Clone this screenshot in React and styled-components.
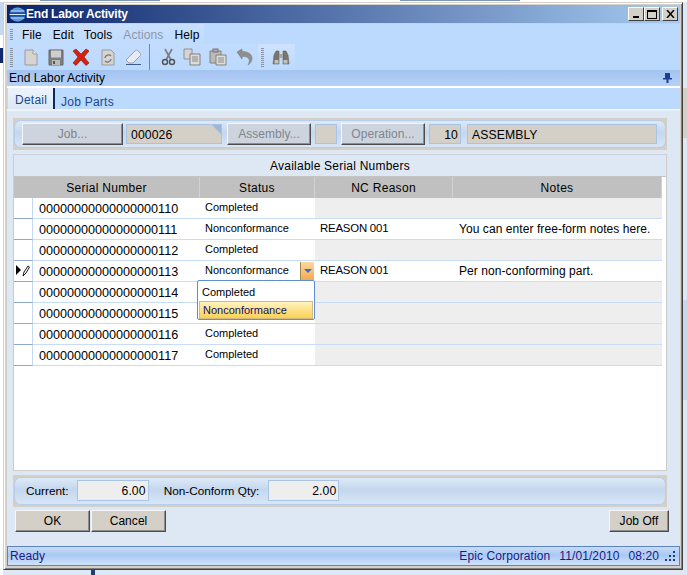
import React from 'react';
import styled, { createGlobalStyle } from 'styled-components';

const Global = createGlobalStyle`
  html, body { margin: 0; padding: 0; width: 687px; height: 575px; overflow: hidden; background: #dee8f5; }
  body { font-family: "Liberation Sans", Arial, sans-serif; font-size: 12px; color: #000; }
  * { box-sizing: border-box; }
`;

const Desktop = styled.div`
  position: relative; width: 687px; height: 575px; overflow: hidden; background: #dee8f5;
  padding: 2px 0 0 3px;
`;
const Behind = styled.div`
  position: absolute; left: ${p => p.$x}px; top: ${p => p.$y}px;
  width: ${p => p.$w}px; height: ${p => p.$h}px; background: ${p => p.$c};
`;
const Window = styled.div`
  position: relative; width: 680px; height: 568px; display: flex; flex-direction: column;
  background: #d4d0c8; border: 1px solid; border-color: #d4d0c8 #404040 #404040 #d4d0c8;
  box-shadow: inset 1px 1px 0 #fff, inset -1px -1px 0 #808080;
  padding: 2px 2px 3px 3px;
`;
const TitleBar = styled.div`
  height: 18px; flex: none; display: flex; align-items: center; padding: 0 2px 0 2px;
  background: linear-gradient(90deg, #0a246a, #a6caf0);
  color: #fff; font-weight: bold; font-size: 12px; letter-spacing: -0.22px; gap: 0;
`;
const TitleText = styled.span` flex: 1; margin-left: 0; `;
const WinBtn = styled.div`
  width: 16px; height: 14px; background: #d4d0c8; margin-left: ${p => p.$gap || 0}px;
  border: 1px solid; border-color: #fff #404040 #404040 #fff;
  display: flex; align-items: center; justify-content: center;
`;
const Frame = styled.div`
  flex: 1; display: flex; flex-direction: column; margin-top: 1px; background: #dee8f5; min-height: 0;
`;
const MenuRow = styled.div`
  height: 20px; flex: none; background: #bcd9fe; display: flex;
`;
const MenuStrip = styled.div`
  width: 197px; display: flex; align-items: center; padding: 1px 0 0 3px;
  background: linear-gradient(180deg, #c9e0fd, #bfdbff);
`;
const Grip = styled.div`
  width: 3px; height: ${p => p.$h}px; flex: none; margin-right: ${p => p.$mr}px;
  background: repeating-linear-gradient(180deg, #8a93a0 0 1px, transparent 1px 2px);
`;
const MenuItem = styled.span`
  font-size: 12px; letter-spacing: 0.1px; margin-right: ${p => p.$mr}px; color: ${p => p.$off ? '#8f98a6' : '#000'};
`;
const ToolRow = styled.div`
  height: 26px; flex: none; background: #bcd9fe; display: flex; align-items: center;
`;
const ToolStrip = styled.div`
  height: 26px; flex: none; display: flex; align-items: center; width: ${p => p.$w}px; padding-left: ${p => p.$pl}px;
  background: linear-gradient(180deg, ${p => p.$c || '#c2dcfe'}, #bcd9fe);
`;
const ToolIcon = styled.svg`
  width: 18px; height: 18px; flex: none; margin-right: ${p => p.$mr}px; display: block;
`;
const ToolSep = styled.div`
  width: 1px; height: 26px; background: #7d8792; flex: none; margin-right: ${p => p.$mr}px;
`;
const PanelHeader = styled.div`
  height: 16px; flex: none; display: flex; align-items: center; justify-content: space-between;
  padding: 0 8px 0 2px; font-size: 12px;
  background: linear-gradient(180deg, #a3c3f0, #b5d1f7);
`;
const TabStrip = styled.div`
  height: 25px; flex: none; background: #bcd9fe; display: flex; align-items: stretch;
  border-top: 2px solid #fff; border-bottom: 2px solid #eef3fa;
`;
const Tab = styled.div`
  color: #164a90; font-size: 12px; letter-spacing: 0.25px; display: flex; align-items: ${p => p.$on ? 'center' : 'flex-end'};
  padding: ${p => p.$on ? '2px 0 0 7px' : '0 0 0 6px'}; width: ${p => p.$on ? '47px' : 'auto'};
  background: ${p => p.$on ? 'linear-gradient(180deg,#edf3fc,#dbe7f6)' : 'transparent'};
  border-right: ${p => p.$on ? '2px solid #0a2a5e' : '0'};
  margin-left: ${p => p.$on ? '1px' : '0'};
`;
const Body = styled.div`
  flex: 1; display: flex; flex-direction: column; padding: 7px 13px 0 6px; min-height: 0; position: relative;
`;
const GroupFrame = styled.div`
  flex: none; height: 32px; background: #d4d0c8; padding: 2px 1px 2px 1px; margin-top: ${p => p.$mt || 0}px; display: flex;
`;
const Group = styled.div`
  flex: 1; display: flex; align-items: center;
  padding: ${p => p.$pad};
  border-radius: 7px; border: 1px solid #b7cde8;
  background: linear-gradient(180deg, #dde9f8 0%, #c4d7ed 45%, #d7e6f7 100%);
`;
const FlatBtn = styled.div`
  height: 22px; width: ${p => p.$w}px; flex: none; display: flex; align-items: center; justify-content: center;
  font-size: 12px; letter-spacing: 0.05px; margin-left: ${p => p.$ml || 0}px;
  background: ${p => p.$off ? '#cdd4dd' : '#d4d0c8'};
  color: ${p => p.$off ? '#7f868e' : '#000'};
  border: 1px solid; border-color: #f4f6f9 #4c4c4c #4c4c4c #f4f6f9;
  box-shadow: inset -1px -1px 0 #8d8d8d;
`;
const Field = styled.div`
  height: ${p => p.$h || 20}px; width: ${p => p.$w}px; flex: none; margin: ${p => p.$m || '0'}; position: relative;
  display: flex; align-items: center; justify-content: ${p => p.$right ? 'flex-end' : 'flex-start'};
  padding: 1px ${p => p.$right ? '2px' : '0'} 0 ${p => p.$right ? '0' : '4px'};
  background: ${p => p.$bg || '#d4d0c8'}; border: 1px solid #a9c3e3; font-size: 12.2px; letter-spacing: 0.1px;
`;
const Notch = styled.div`
  position: absolute; right: 0; top: 0; width: 0; height: 0;
  border-top: 9px solid #9bb6da; border-left: 9px solid transparent;
`;
const Table = styled.div`
  flex: none; height: 317px; margin-top: 4px; background: #fff; border: 1px solid #ccc; border-top: 0; display: flex; flex-direction: column;
  position: relative;
`;
const Caption = styled.div`
  height: 23px; flex: none; display: flex; align-items: center; justify-content: center;
  background: #dee8f5; border-top: 1px solid #ccd3dc; border-bottom: 1px solid #c4c4c4; font-size: 12px; letter-spacing: 0.22px;
`;
const HeadRow = styled.div`
  height: 21px; flex: none; display: grid; grid-template-columns: 186px 115px 138px 209px; width: 648px; background: #c0c0c0;
`;
const HeadCell = styled.div`
  display: flex; align-items: center; justify-content: center; font-size: 12px; letter-spacing: 0.3px;
  border-right: 1px solid #d2d2d2;
`;
const Row = styled.div`
  height: 21px; flex: none; display: grid; grid-template-columns: 19px 167px 115px 138px 209px; width: 648px;
`;
const Selector = styled.div`
  background: #fff; border-right: 1px solid #c3d8f2; border-bottom: 1px solid #8fa9c9;
  display: flex; align-items: center; justify-content: center;
`;
const Cell = styled.div`
  display: flex; align-items: center; position: relative; padding-left: ${p => p.$pl}px; white-space: nowrap;
  font-size: ${p => p.$fs}px; letter-spacing: ${p => p.$ls}px;
  padding-bottom: ${p => p.$pb || 0}px; padding-top: ${p => p.$pt || 0}px;
  background: ${p => p.$bg}; border-bottom: 1px solid #c9dcf5;
`;
const DropBtn = styled.div`
  position: absolute; left: 100px; top: 1px; width: 14px; height: 18px; border-left: 1px solid #a08a50;
  background: linear-gradient(180deg, #fbd9a0, #f5a953);
  display: flex; align-items: center; justify-content: center;
  &::after { content: ''; border-top: 4px solid #3b6fc0; border-left: 4px solid transparent; border-right: 4px solid transparent; }
`;
const DropList = styled.div`
  position: absolute; left: 183px; top: 126px; width: 118px; height: 40px; background: #fff; z-index: 2;
  border: 1px solid #5d8fd2; border-radius: 2px; padding: 2px 1px; display: flex; flex-direction: column;
`;
const DropItem = styled.div`
  height: 18px; flex: none; display: flex; align-items: center; padding: 0 0 1px 3px; font-size: 11px; letter-spacing: 0;
  color: ${p => p.$on ? '#10106e' : '#000'};
  background: ${p => p.$on ? 'linear-gradient(180deg,#fff3bd,#fcd054)' : '#fff'};
  border: ${p => p.$on ? '1px solid #d2bb80' : '0'};
`;
const Label = styled.span`
  font-size: 11.8px; margin: ${p => p.$m};
`;
const Buttons = styled.div`
  flex: none; display: flex; margin: 3px -2px 0 2px; height: 22px; justify-content: space-between;
`;
const ButtonPair = styled.div` display: flex; `;
const Spacer = styled.div` flex: 1; `;
const StatusBar = styled.div`
  flex: none; height: 20px; display: flex; align-items: center; padding: 0 3px 0 2px;
  border: 1px solid #5c85bf; color: #1a1a86; font-size: 12px; letter-spacing: 0.1px;
  background: linear-gradient(180deg, #c8dbf6 0%, #a9c9f3 45%, #d0e2f9 100%);
`;
const StatusRight = styled.span` margin-left: ${p => p.$ml || 0}px; `;
const ResizeGrip = styled.svg` width: 12px; height: 12px; margin-left: 5px; flex: none; `;

const rows = [
  ['00000000000000000110', 'Completed', '', ''],
  ['00000000000000000111', 'Nonconformance', 'REASON 001', 'You can enter free-form notes here.'],
  ['00000000000000000112', 'Completed', '', ''],
  ['00000000000000000113', 'Nonconformance', 'REASON 001', 'Per non-conforming part.', true],
  ['00000000000000000114', '', '', ''],
  ['00000000000000000115', '', '', ''],
  ['00000000000000000116', 'Completed', '', ''],
  ['00000000000000000117', 'Completed', '', ''],
];

const NewDoc = () => (
  <ToolIcon viewBox="0 0 18 18" $mr={7}><path d="M3 2h8l4 4v11H3z" fill="#d6d4d0" stroke="#9a9a9a"/><path d="M11 2v4h4" fill="#eee" stroke="#9a9a9a"/></ToolIcon>
);
const Save = () => (
  <ToolIcon viewBox="0 0 18 18" $mr={7}><path d="M2 2h14v15H2z" fill="#7e7e7e" stroke="#666"/><rect x="4" y="2.5" width="10" height="7" fill="#cfcfcf"/><rect x="5" y="12" width="8" height="5" fill="#bbb"/><rect x="6" y="13" width="2" height="3" fill="#555"/></ToolIcon>
);
const Cross = () => (
  <ToolIcon viewBox="0 0 18 18" $mr={9}><path d="M1 3L4 1l5 5 5-5 3 2-5 6 5 6-3 2.500-5-5.500-5 5.500-3-2.500 5-6z" fill="#d4200f" stroke="#8c2a1c" strokeWidth="0.7"/></ToolIcon>
);
const Refresh = () => (
  <ToolIcon viewBox="0 0 18 18" $mr={7}><path d="M3 2h9l3 3v12H3z" fill="#d6d4d0" stroke="#9a9a9a"/><path d="M6 10a3.500 3.500 0 0 1 6-2M12 11a3.500 3.500 0 0 1-6 2" fill="none" stroke="#777" strokeWidth="1.400"/></ToolIcon>
);
const Eraser = () => (
  <ToolIcon viewBox="0 0 18 18" $mr={7}><path d="M2 12L11 3c1-1 2-1 3 0l2 2c1 1 1 2 0 3l-7 7H5z" fill="#e8ecf2" stroke="#9aa2ad"/><path d="M2 16.500h15" stroke="#3e5a8c"/></ToolIcon>
);
const Scissors = () => (
  <ToolIcon viewBox="0 0 18 18" $mr={5}><path d="M5 1l6 11M12 1L6 12" stroke="#7c7c7c" strokeWidth="1.600" fill="none"/><circle cx="5" cy="14" r="2.500" fill="none" stroke="#555" strokeWidth="1.500"/><circle cx="12" cy="14" r="2.500" fill="none" stroke="#555" strokeWidth="1.500"/></ToolIcon>
);
const Copy = () => (
  <ToolIcon viewBox="0 0 18 18" $mr={8}><path d="M1 1h8v10H1z" fill="#d6d4d0" stroke="#909090"/><path d="M7 6h10v11H7z" fill="#dedcd8" stroke="#808080"/><path d="M9 9h6M9 11h6M9 13h6" stroke="#888"/></ToolIcon>
);
const Paste = () => (
  <ToolIcon viewBox="0 0 18 18" $mr={9}><path d="M1 3h11v12H1z" fill="#bcbab6" stroke="#808080"/><rect x="4" y="1" width="5" height="3" fill="#aaa" stroke="#777"/><path d="M7 7h10v10H7z" fill="#e0ded9" stroke="#808080"/><path d="M9 10h6M9 12h6M9 14h6" stroke="#888"/></ToolIcon>
);
const Undo = () => (
  <ToolIcon viewBox="0 0 18 18" $mr={0}><path d="M1 4l5-3v2.500c5 0 10 2 10 7 0 3-2 5-4 6.500 1-2 2-4 1-6-1-2-4-3-7-2.500V11z" fill="#8f8f8f" stroke="#7a7a7a" strokeWidth="0.6"/></ToolIcon>
);
const Binoculars = () => (
  <ToolIcon viewBox="0 0 18 18" $mr={0}><path d="M1 16l1-9 2-4h3v13zM17 16l-1-9-2-4h-3v13z" fill="#77776f" stroke="#66665f" strokeWidth="0.6"/><rect x="7" y="6" width="4" height="4" fill="#a8a69e"/><rect x="2.500" y="12" width="4" height="3.500" fill="#c4c1b8"/><rect x="11.500" y="12" width="4" height="3.500" fill="#c4c1b8"/></ToolIcon>
);

function StatusWrap() {
  return (
    <StatusBar>
      Ready
      <Spacer />
      <StatusRight>Epic Corporation</StatusRight>
      <StatusRight $ml={9}>11/01/2010</StatusRight>
      <StatusRight $ml={9}>08:20</StatusRight>
      <ResizeGrip viewBox="0 0 12 12">
        <path d="M9 1h2v2H9zM5 5h2v2H5zM9 5h2v2H9zM1 9h2v2H1zM5 9h2v2H5zM9 9h2v2H9z" fill="#1c3f7a" />
      </ResizeGrip>
    </StatusBar>
  );
}

export default function App() {
  return (
    <Desktop>
      <Global />
      <Behind $x={0} $y={0} $w={3} $h={35} $c="#c4d8f0" />
      <Behind $x={0} $y={35} $w={3} $h={14} $c="#ffffff" />
      <Behind $x={0} $y={48} $w={3} $h={15} $c="#12286e" />
      <Behind $x={0} $y={63} $w={3} $h={512} $c="#ffffff" />
      <Behind $x={0} $y={0} $w={687} $h={2} $c="#ffffff" />
      <Behind $x={40} $y={0} $w={120} $h={1} $c="#7d97b8" />
      <Behind $x={400} $y={0} $w={120} $h={1} $c="#7d97b8" />
      <Behind $x={91} $y={570} $w={4} $h={5} $c="#1f3f7a" />
      <Behind $x={683} $y={88} $w={4} $h={50} $c="#d4d0c8" />
      <Behind $x={683} $y={300} $w={4} $h={100} $c="#c8d8ec" />
      <Window>
        <TitleBar>
          <svg width="17" height="15" viewBox="0 0 17 15" style={{ flex: 'none' }}>
            <defs>
              <linearGradient id="orb" x1="0" y1="0" x2="0" y2="1">
                <stop offset="0" stopColor="#6fb0ee" />
                <stop offset="0.5" stopColor="#0f3f9e" />
                <stop offset="1" stopColor="#6fb0ee" />
              </linearGradient>
            </defs>
            <ellipse cx="8.500" cy="7.500" rx="8" ry="7" fill="url(#orb)" />
            <path d="M1.500 4h14M0.500 7.500h16M1.500 11h14" stroke="#d5ecfb" strokeWidth="1" />
          </svg>
          <TitleText>End Labor Activity</TitleText>
          <WinBtn><svg width="8" height="8"><rect x="1" y="6" width="6" height="2" fill="#000" /></svg></WinBtn>
          <WinBtn><svg width="10" height="9"><rect x="0.500" y="1" width="9" height="7.500" fill="none" stroke="#000" /><rect x="0" y="0" width="10" height="2" fill="#000" /></svg></WinBtn>
          <WinBtn $gap={2}><svg width="9" height="8"><path d="M1 0l7 8M8 0L1 8" stroke="#000" strokeWidth="1.500" /></svg></WinBtn>
        </TitleBar>
        <Frame>
          <MenuRow>
            <MenuStrip>
              <Grip $h={12} $mr={9} />
              <MenuItem $mr={11}>File</MenuItem>
              <MenuItem $mr={10}>Edit</MenuItem>
              <MenuItem $mr={11}>Tools</MenuItem>
              <MenuItem $mr={11} $off>Actions</MenuItem>
              <MenuItem $mr={0}>Help</MenuItem>
            </MenuStrip>
          </MenuRow>
          <ToolRow>
            <ToolStrip $w={251} $pl={3}>
              <Grip $h={19} $mr={9} />
              <NewDoc /><Save /><Cross /><Refresh /><Eraser />
              <ToolSep $mr={10} />
              <Scissors /><Copy /><Paste /><Undo />
            </ToolStrip>
            <ToolStrip $w={37} $pl={3} $c="#cfe2fd">
              <Grip $h={19} $mr={8} />
              <Binoculars />
            </ToolStrip>
          </ToolRow>
          <PanelHeader>
            End Labor Activity
            <svg width="9" height="10" viewBox="0 0 9 10"><path d="M2 0h5v5H2zM0 5h9v1.500H0zM3.500 6h2v4h-2z" fill="#1c3f96" /></svg>
          </PanelHeader>
          <TabStrip>
            <Tab $on>Detail</Tab>
            <Tab>Job Parts</Tab>
          </TabStrip>
          <Body>
            <GroupFrame>
              <Group $pad="0 0 0 7px">
                <FlatBtn $off $w={101}>Job...</FlatBtn>
                <Field $w={96} $m="0 5px 0 3px">000026<Notch /></Field>
                <FlatBtn $off $w={84}>Assembly...</FlatBtn>
                <Field $w={22} $m="0 4px 0 4px" />
                <FlatBtn $off $w={84}>Operation...</FlatBtn>
                <Field $w={32} $m="0 6px 0 4px" $right>10</Field>
                <Field $w={190}>ASSEMBLY</Field>
              </Group>
            </GroupFrame>
            <Table>
              <Caption>Available Serial Numbers</Caption>
              <HeadRow>
                <HeadCell>Serial Number</HeadCell>
                <HeadCell>Status</HeadCell>
                <HeadCell>NC Reason</HeadCell>
                <HeadCell>Notes</HeadCell>
              </HeadRow>
              {rows.map(r => {
                const blank = r[2] ? '#fff' : '#eeeeee';
                return (
                  <Row key={r[0]}>
                    <Selector>
                      {r[4] && (
                        <svg width="14" height="12" viewBox="0 0 14 12">
                          <path d="M0 0l5 5-5 5z" fill="#000" />
                          <path d="M7 11l1-4 4-6 1.500 1-3.500 6z" fill="#fff" stroke="#000" strokeWidth="0.9" />
                        </svg>
                      )}
                    </Selector>
                    <Cell $pl={6} $fs={12.6} $ls={0} $pt={1} $bg="#fff">{r[0]}</Cell>
                    <Cell $pl={5} $fs={11} $ls={0} $pb={3} $bg="#fff">
                      {r[1]}
                      {r[4] && <DropBtn />}
                    </Cell>
                    <Cell $pl={5} $fs={11.4} $ls={-0.2} $pb={3} $bg={blank}>{r[2]}</Cell>
                    <Cell $pl={6} $fs={12} $ls={0.07} $bg={blank}>{r[3]}</Cell>
                  </Row>
                );
              })}
              <DropList>
                <DropItem>Completed</DropItem>
                <DropItem $on>Nonconformance</DropItem>
              </DropList>
            </Table>
            <GroupFrame $mt={4}>
              <Group $pad="0 0 1px 0">
                <Label $m="0 8px 0 11px">Current:</Label>
                <Field $w={72} $h={21} $bg="#eeeeee" $right>6.00</Field>
                <Label $m="0 9px 0 15px">Non-Conform Qty:</Label>
                <Field $w={71} $h={21} $bg="#eeeeee" $right>2.00</Field>
              </Group>
            </GroupFrame>
            <Buttons>
              <ButtonPair>
                <FlatBtn $w={75}>OK</FlatBtn>
                <FlatBtn $w={75} $ml={1}>Cancel</FlatBtn>
              </ButtonPair>
              <FlatBtn $w={60}>Job Off</FlatBtn>
            </Buttons>
            <Spacer />
          </Body>
          <StatusWrap />
        </Frame>
      </Window>
    </Desktop>
  );
}
